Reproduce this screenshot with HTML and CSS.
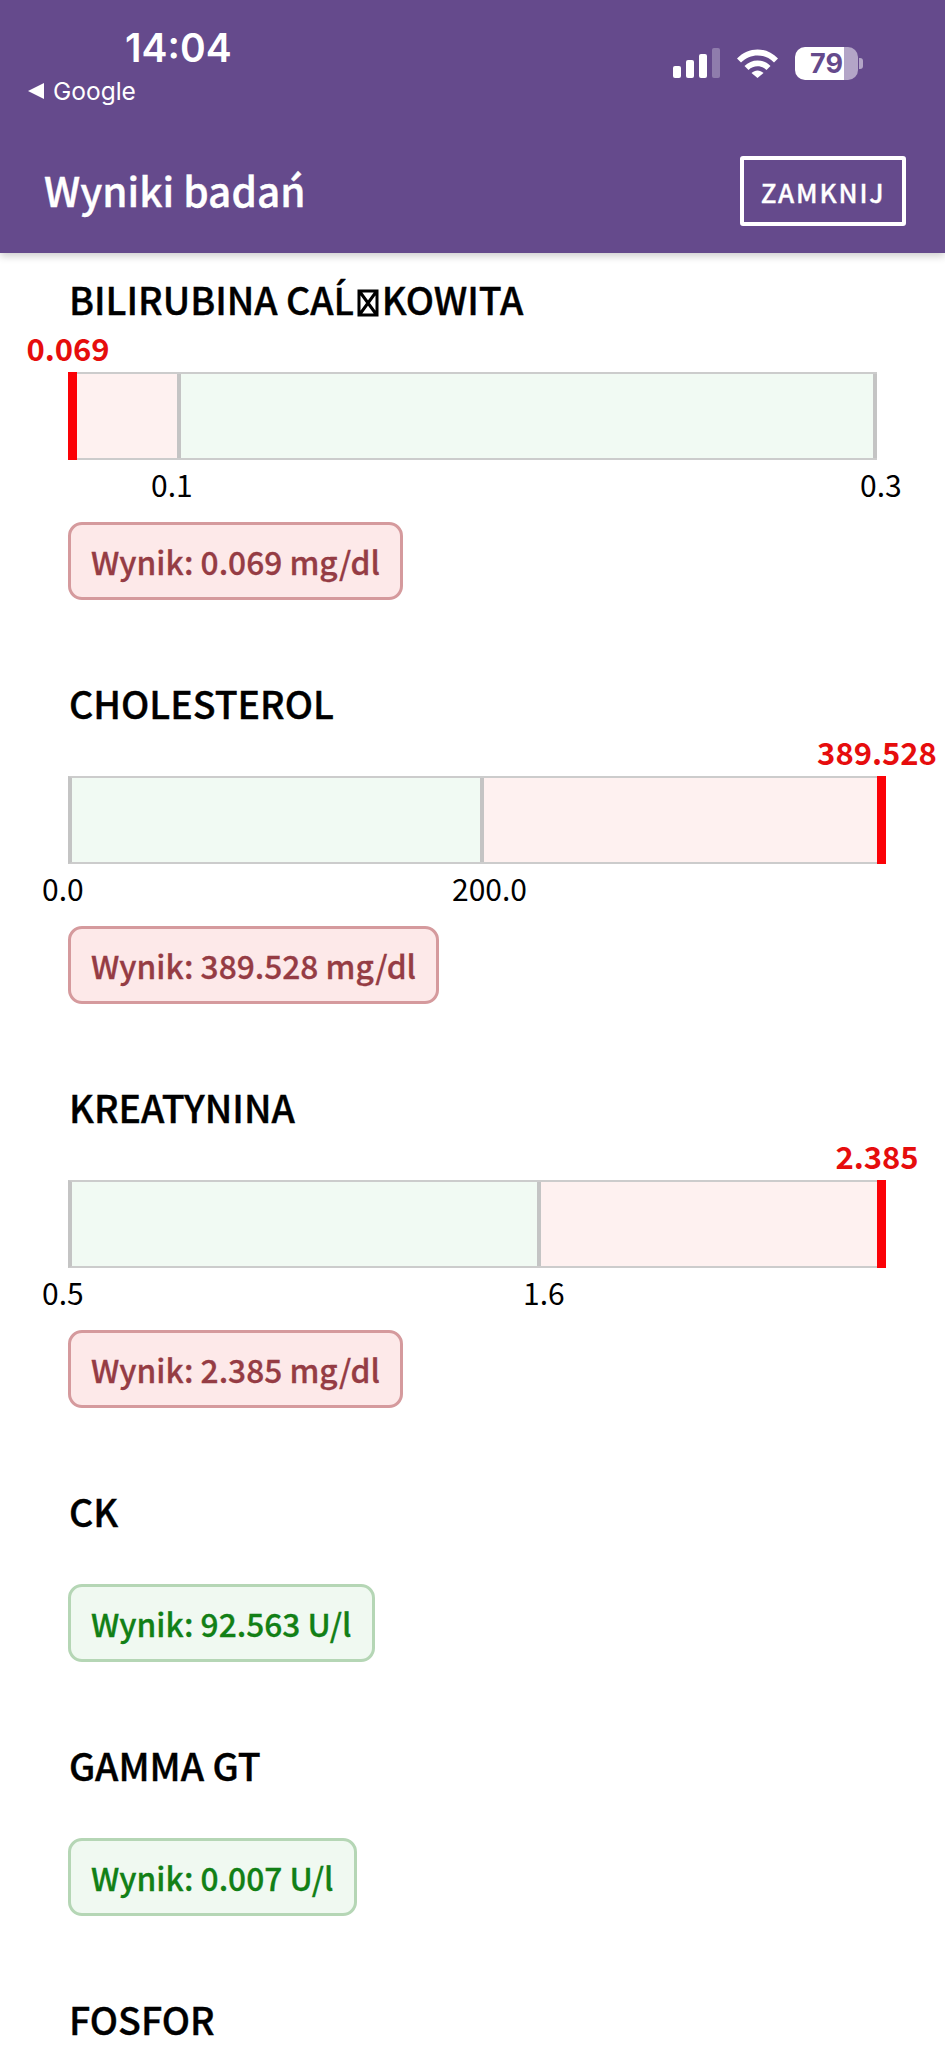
FILE: index.html
```html
<!DOCTYPE html>
<html lang="pl">
<head>
    <meta charset="UTF-8">
    <meta name="viewport" content="width=device-width, initial-scale=1.0">
    <title>Wyniki badań</title>
    <link rel="stylesheet" href="styles.css">
</head>
<body>
    <header class="header">
        <!-- Status bar -->
        <div class="status">
            <div class="status-left">
                <div class="clock">14:04</div>
                <div class="back"><span class="back-arrow"></span>Google</div>
            </div>
            <div class="status-right">
                <div class="signal">
                    <span class="signal-bar s1"></span>
                    <span class="signal-bar s2"></span>
                    <span class="signal-bar s3"></span>
                    <span class="signal-bar s4"></span>
                </div>
                <svg class="wifi" width="43" height="31" viewBox="0 0 43 31">
                    <path d="M1 11.5 C12.5 -0.5 30.5 -0.5 42 11.5 L38 15.5 C28.500 6 14.500 6 5 15.500 Z" fill="#fff"/>
                    <path d="M8.500 19 C15.500 11.500 27.500 11.500 34.500 19 L30.500 23 C25.500 18 17.500 18 12.500 23 Z" fill="#fff"/>
                    <path d="M15.500 26 C19 22.500 24 22.500 27.500 26 L21.500 31 Z" fill="#fff"/>
                </svg>
                <div class="battery">
                    <div class="battery-body"><span class="battery-level">79</span></div>
                    <span class="battery-nub"></span>
                </div>
            </div>
        </div>
        <!-- Toolbar -->
        <div class="toolbar">
            <h1>Wyniki badań</h1>
            <button class="close-btn">ZAMKNIJ</button>
        </div>
    </header>

    <main class="content">
        <section class="result">
            <h2>BILIRUBINA CA<span class="lacute">Ĺ</span><svg class="tofu" width="22" height="28" viewBox="0 0 22 28"><path d="M2 2H20V26H2Z M3 3L19 25 M19 3L3 25" fill="none" stroke="#000" stroke-width="3"/></svg>KOWITA</h2>
            <div class="chart">
                <span class="value" style="left: 0%">0.069</span>
                <div class="bar">
                    <div class="seg bad" style="width: 109px"></div>
                    <div class="seg good" style="flex: 1"></div>
                </div>
                <span class="marker" style="left: 0"></span>
                <span class="tick" style="left: 83px">0.1</span>
                <span class="tick" style="left: 792px">0.3</span>
            </div>
            <div class="pill pill-bad">Wynik: 0.069 mg/dl</div>
        </section>

        <section class="result">
            <h2>CHOLESTEROL</h2>
            <div class="chart">
                <span class="value" style="left: 100%">389.528</span>
                <div class="bar">
                    <div class="seg good" style="width: 412px"></div>
                    <div class="seg bad" style="flex: 1"></div>
                </div>
                <span class="marker" style="left: 100%"></span>
                <span class="tick" style="left: -26px">0.0</span>
                <span class="tick" style="left: 384px">200.0</span>
            </div>
            <div class="pill pill-bad">Wynik: 389.528 mg/dl</div>
        </section>

        <section class="result">
            <h2>KREATYNINA</h2>
            <div class="chart">
                <span class="value" style="left: 100%">2.385</span>
                <div class="bar">
                    <div class="seg good" style="width: 469px"></div>
                    <div class="seg bad" style="flex: 1"></div>
                </div>
                <span class="marker" style="left: 100%"></span>
                <span class="tick" style="left: -26px">0.5</span>
                <span class="tick" style="left: 455px">1.6</span>
            </div>
            <div class="pill pill-bad">Wynik: 2.385 mg/dl</div>
        </section>

        <section class="result">
            <h2>CK</h2>
            <div class="pill pill-good">Wynik: 92.563 U/l</div>
        </section>

        <section class="result">
            <h2>GAMMA GT</h2>
            <div class="pill pill-good">Wynik: 0.007 U/l</div>
        </section>

        <section class="result">
            <h2>FOSFOR</h2>
        </section>
    </main>
</body>
</html>
```

FILE: styles.css
```css
html, body {
    margin: 0;
    padding: 0;
    height: 100%;
    overflow: hidden;
    background: #fff;
    color: #000;
    font-family: "Noto Sans CJK JP", "Noto Sans", sans-serif;
}

/* Header */
.header {
    height: 253px;
    background-color: #654a8c;
    box-shadow: 0 3px 8px rgba(0, 0, 0, 0.2);
    color: #fff;
    display: flex;
    flex-direction: column;
}
.status {
    height: 128px;
    display: flex;
    justify-content: space-between;
    font-family: Inter, sans-serif;
}
.status-left {
    padding: 24px 0 0 28px;
}
.clock {
    margin-left: 97px;
    font-size: 39px;
    line-height: 48px;
    font-weight: 600;
}
.back {
    display: flex;
    align-items: center;
    gap: 9px;
    font-size: 24.500px;
    line-height: 38px;
}
.back-arrow {
    width: 0;
    height: 0;
    border-top: 8px solid transparent;
    border-bottom: 8px solid transparent;
    border-right: 16px solid #fff;
}
.status-right {
    display: flex;
    align-items: flex-start;
    padding: 47px 82px 0 0;
}
.signal {
    display: flex;
    align-items: flex-end;
    gap: 5px;
    height: 31px;
    margin-right: 16px;
}
.signal-bar {
    width: 8px;
    background: #fff;
    border-radius: 2px;
}
.s1 { height: 12px; }
.s2 { height: 18px; }
.s3 { height: 24px; }
.s4 { height: 30px; background: rgba(255, 255, 255, 0.28); }
.wifi {
    margin-right: 16px;
}
.battery {
    display: flex;
    align-items: center;
    gap: 1px;
}
.battery-body {
    width: 63px;
    height: 33px;
    border-radius: 10px;
    background: linear-gradient(to right, #fff 49px, #b3a5c7 49px);
    color: #654a8c;
    font-size: 27px;
    font-weight: 700;
    line-height: 33px;
    overflow: hidden;
}
.battery-level {
    display: block;
    width: 48px;
    text-align: right;
}
.battery-nub {
    width: 4px;
    height: 11px;
    background: #b3a5c7;
    border-radius: 0 3px 3px 0;
}
.toolbar {
    flex: 1;
    display: flex;
    justify-content: space-between;
    align-items: flex-start;
    padding: 28px 39px 0 44px;
}
.toolbar h1 {
    margin: 0;
    font-size: 40.500px;
    line-height: 68px;
    font-weight: 500;
    -webkit-text-stroke: 0.4px #fff;
}
.close-btn {
    width: 166px;
    height: 70px;
    background: none;
    border: 4px solid #fff;
    border-radius: 3px;
    color: #fff;
    font-family: inherit;
    font-size: 26px;
    font-weight: 500;
    letter-spacing: 1.800px;
    -webkit-text-stroke: 0.3px #fff;
}

/* Results */
.content {
    padding: 24px 68px 0;
}
.result {
    margin-bottom: 81px;
}
.result h2 {
    margin: -2px 0 49px 1px;
    font-size: 37.500px;
    line-height: 48px;
    font-weight: 500;
    -webkit-text-stroke: 0.4px #000;
}
/* the CJK font puts this accent in the wrong place */
.lacute {
    font-family: "Noto Sans", sans-serif;
    line-height: 1;
}
.tofu {
    vertical-align: -2px;
    margin: 0 3px;
}
.chart {
    position: relative;
    width: 809px;
    height: 88px;
    margin-bottom: 62px;
}
.bar {
    display: flex;
    height: 88px;
    box-sizing: border-box;
    border-top: 2px solid #cccccc;
    border-bottom: 2px solid #cccccc;
    border-left: 4px solid #c4c4c4;
}
.seg {
    box-sizing: border-box;
    border-right: 4px solid #c4c4c4;
}
.good { background-color: #f1faf3; }
.bad { background-color: #fef1f0; }
.bad:last-child { border-right: 0; }
.marker {
    position: absolute;
    top: 0;
    bottom: 0;
    width: 9px;
    background-color: #fb0207;
}
.value {
    position: absolute;
    bottom: 100%;
    transform: translateX(-50%);
    margin-bottom: 4px;
    color: #e60d0d;
    font-size: 31px;
    line-height: 40px;
    font-weight: 700;
    white-space: nowrap;
}
.tick {
    position: absolute;
    top: 100%;
    margin-top: 3px;
    font-size: 30px;
    line-height: 42px;
    white-space: nowrap;
}
.pill {
    display: table;
    box-sizing: border-box;
    height: 78px;
    padding: 0 20px;
    border-width: 3px;
    border-style: solid;
    border-radius: 14px;
    font-size: 31.700px;
    line-height: 72px;
    font-weight: 500;
    -webkit-text-stroke: 0.3px;
}
.pill-bad {
    color: #953c44;
    background-color: #fde9e9;
    border-color: #d59a9d;
}
.pill-good {
    color: #128016;
    background-color: #f0f9f1;
    border-color: #b5d6b5;
}
```
